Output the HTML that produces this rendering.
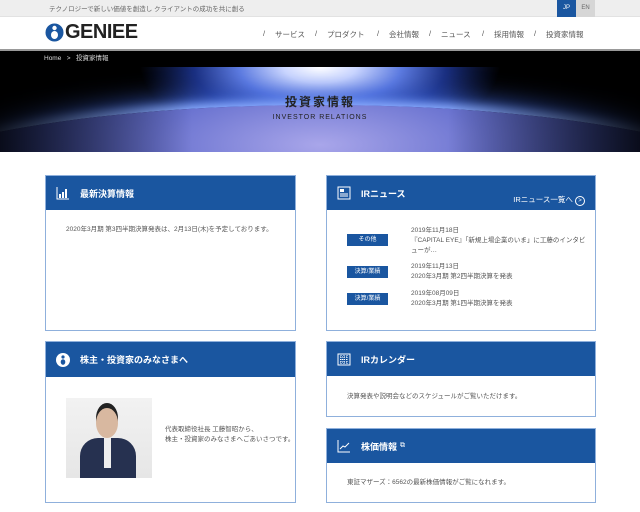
<!DOCTYPE html><html><head><meta charset="utf-8"><style>
*{margin:0;padding:0;box-sizing:border-box}
body{width:640px;height:512px;overflow:hidden;background:#fff;font-family:"Liberation Sans","Noto Sans CJK JP",sans-serif;color:#555;position:relative}
.abs{position:absolute}
.top{left:0;top:0;width:640px;height:17px;background:#eeeeee;border-bottom:1px solid #e2e2e2}
.hdr{left:0;top:17px;width:640px;height:34px;background:#fff;border-bottom:2px solid #999}
.nav{position:absolute;top:12px;font-size:7.5px;color:#555;white-space:nowrap}
.bc{left:0;top:51px;width:640px;height:16px;background:#000;color:#ddd;font-size:6.5px;line-height:16px;padding-left:44px}
.hero{left:0;top:67px;width:640px;height:85px;overflow:hidden;background:#000}
.card{position:absolute;border:1px solid #8fb0dc;background:#fff}
.ch{background:#1a56a0;color:#fff;font-weight:bold;font-size:9px;height:34px;display:flex;align-items:center;padding-left:10px}
.ch svg{margin-right:10px}
.t{font-size:6.5px;color:#555;line-height:10px}
.tag{position:absolute;left:20px;width:41px;height:12px;background:#1a56a0;color:#fff;font-size:6px;text-align:center;line-height:12px}
</style></head><body>
<div class="abs top"><span class="abs" style="left:49px;top:3px;font-size:6.5px;color:#666">テクノロジーで新しい価値を創造し クライアントの成功を共に創る</span>
<div class="abs" style="left:557px;top:0;width:19px;height:17px;background:#1a56a0;color:#fff;font-size:6px;text-align:center;line-height:17px">JP</div>
<div class="abs" style="left:576px;top:0;width:19px;height:17px;background:#d6d6d6;color:#666;font-size:6px;text-align:center;line-height:17px">EN</div></div>
<div class="abs hdr">
<svg class="abs" style="left:45px;top:6px" width="19" height="19"><circle cx="9.5" cy="9.5" r="9" fill="#1a56a0"/><circle cx="9.5" cy="5" r="2.2" fill="#fff"/><ellipse cx="9.5" cy="12" rx="3.5" ry="4" fill="#fff"/></svg>
<span class="abs" style="left:65px;top:4px;font-size:20px;font-weight:bold;color:#222;letter-spacing:-0.5px">GENIEE</span>
<span class="nav" style="left:263px">/</span><span class="nav" style="left:275px">サービス</span>
<span class="nav" style="left:315px">/</span><span class="nav" style="left:327px">プロダクト</span>
<span class="nav" style="left:377px">/</span><span class="nav" style="left:389px">会社情報</span>
<span class="nav" style="left:429px">/</span><span class="nav" style="left:441px">ニュース</span>
<span class="nav" style="left:482px">/</span><span class="nav" style="left:494px">採用情報</span>
<span class="nav" style="left:534px">/</span><span class="nav" style="left:546px">投資家情報</span>
</div>
<div class="abs bc">Home &nbsp;&nbsp;&gt;&nbsp;&nbsp; 投資家情報</div>
<div class="abs hero">
<div class="abs" style="left:-20px;top:-60px;width:680px;height:160px;background:radial-gradient(ellipse 180px 80px at 340px 60px,#ffffff 0%,#cdd8ff 20%,#5d7be0 45%,#1a2f80 70%,rgba(0,0,0,0) 100%)"></div>
<div class="abs" style="left:-150px;top:38px;width:940px;height:200px;border-radius:50%;background:radial-gradient(ellipse at 50% 20%,#a9a6ea 0%,#6a73d0 25%,#3d4fae 50%,#1d2b78 80%);box-shadow:0 -4px 10px #8fb0ff,0 -10px 25px #3e63d8"></div>
<div class="abs" style="left:0;top:0;width:640px;height:85px;background:linear-gradient(90deg,rgba(0,0,0,.85) 0%,rgba(0,0,0,0) 30%,rgba(0,0,0,0) 70%,rgba(0,0,0,.85) 100%)"></div>
<div class="abs" style="left:0;top:26px;width:640px;text-align:center;font-size:12px;font-weight:bold;color:#222;letter-spacing:2px">投資家情報</div>
<div class="abs" style="left:0;top:47px;width:640px;text-align:center;font-size:7px;color:#222;letter-spacing:1px">INVESTOR RELATIONS</div></div>

<div class="card" style="left:45px;top:175px;width:251px;height:156px"><div class="ch"><svg width="14" height="14"><path d="M1 1V13H13" stroke="#fff" fill="none"/><rect x="3" y="8" width="2" height="4" fill="#fff"/><rect x="6" y="6" width="2" height="6" fill="#fff"/><rect x="9" y="3" width="2" height="9" fill="#fff"/></svg>最新決算情報</div>
<div class="t abs" style="left:20px;top:49px">2020年3月期 第3四半期決算発表は、2月13日(木)を予定しております。</div></div>

<div class="card" style="left:326px;top:175px;width:270px;height:156px"><div class="ch"><svg width="14" height="14"><rect x="1" y="1" width="12" height="12" stroke="#fff" fill="none"/><rect x="3" y="3" width="4" height="3" fill="#fff"/><path d="M3 8H11M3 10H11" stroke="#fff"/></svg>IRニュース</div>
<div class="abs" style="right:10px;top:18px;font-size:7.5px;color:#fff">IRニュース一覧へ <span style="display:inline-block;width:10px;height:10px;border:1px solid #fff;border-radius:50%;font-size:6px;text-align:center;line-height:8px">&gt;</span></div>
<div class="tag" style="top:58px">その他</div>
<div class="t abs" style="left:84px;top:50px;width:175px">2019年11月18日<br>『CAPITAL EYE』「新規上場企業のいま」に工藤のインタビューが…</div>
<div class="tag" style="top:90px">決算/業績</div>
<div class="t abs" style="left:84px;top:86px">2019年11月13日<br>2020年3月期 第2四半期決算を発表</div>
<div class="tag" style="top:117px">決算/業績</div>
<div class="t abs" style="left:84px;top:113px">2019年08月09日<br>2020年3月期 第1四半期決算を発表</div></div>

<div class="card" style="left:45px;top:341px;width:251px;height:162px"><div class="ch" style="height:35px"><svg width="14" height="14"><circle cx="7" cy="7" r="7" fill="#fff"/><circle cx="7" cy="4" r="1.6" fill="#1a56a0"/><ellipse cx="7" cy="9" rx="2.3" ry="2.8" fill="#1a56a0"/></svg>株主・投資家のみなさまへ</div>
<div class="abs" style="left:20px;top:56px;width:86px;height:80px;background:linear-gradient(#f2f2f2,#e6e6e6);overflow:hidden"><div class="abs" style="left:30px;top:10px;width:22px;height:30px;border-radius:50%;background:#d8b8a0;box-shadow:0 -5px 0 #222"></div><div class="abs" style="left:14px;top:40px;width:56px;height:42px;border-radius:18px 18px 0 0;background:#263150"></div><div class="abs" style="left:38px;top:40px;width:7px;height:30px;background:#eee"></div></div>
<div class="t abs" style="left:119px;top:83px">代表取締役社長 工藤智昭から、<br>株主・投資家のみなさまへごあいさつです。</div></div>

<div class="card" style="left:326px;top:341px;width:270px;height:76px"><div class="ch"><svg width="14" height="14"><rect x="1" y="2" width="12" height="11" stroke="#fff" fill="none"/><path d="M3 5H11M3 7.5H11M3 10H11M4 3V12M7 3V12M10 3V12" stroke="#fff" stroke-dasharray="1 1"/></svg>IRカレンダー</div>
<div class="t abs" style="left:20px;top:50px">決算発表や説明会などのスケジュールがご覧いただけます。</div></div>

<div class="card" style="left:326px;top:428px;width:270px;height:75px"><div class="ch"><svg width="14" height="14"><path d="M1 1V13H13" stroke="#fff" fill="none"/><path d="M3 10L6 7L8 8L12 4" stroke="#fff" fill="none"/></svg>株価情報 <span style="font-size:7px;font-weight:normal;margin-left:3px">⧉</span></div>
<div class="t abs" style="left:20px;top:49px">東証マザーズ：6562の最新株価情報がご覧になれます。</div></div>
</body></html>
